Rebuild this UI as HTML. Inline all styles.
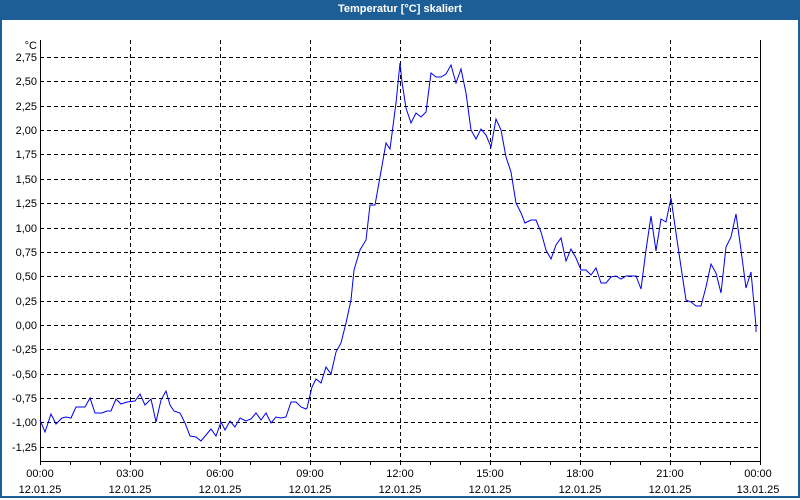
<!DOCTYPE html>
<html><head><meta charset="utf-8"><style>
html,body{margin:0;padding:0;width:800px;height:500px;overflow:hidden;background:#fff;font-family:"Liberation Sans",sans-serif}
.frame{position:absolute;left:0;top:0;width:796px;height:496px;border:2px solid #1d5e97;border-top:none}
.title{position:absolute;left:0;top:0;width:800px;height:20px;background:#1d5e97;color:#fff;font-weight:bold;font-size:11px;line-height:19px;text-align:center}
svg{position:absolute;left:0;top:0}
</style></head><body>
<div class="frame"></div>
<div class="title">Temperatur [°C] skaliert</div>
<svg width="800" height="500" font-family="Liberation Sans, sans-serif" font-size="11" fill="#000">
<g stroke="#000" stroke-width="1" stroke-dasharray="4,3" shape-rendering="crispEdges">
<line x1="40" y1="57.5" x2="760" y2="57.5"/><line x1="40" y1="81.5" x2="760" y2="81.5"/><line x1="40" y1="106.5" x2="760" y2="106.5"/><line x1="40" y1="130.5" x2="760" y2="130.5"/><line x1="40" y1="154.5" x2="760" y2="154.5"/><line x1="40" y1="179.5" x2="760" y2="179.5"/><line x1="40" y1="203.5" x2="760" y2="203.5"/><line x1="40" y1="228.5" x2="760" y2="228.5"/><line x1="40" y1="252.5" x2="760" y2="252.5"/><line x1="40" y1="276.5" x2="760" y2="276.5"/><line x1="40" y1="301.5" x2="760" y2="301.5"/><line x1="40" y1="325.5" x2="760" y2="325.5"/><line x1="40" y1="349.5" x2="760" y2="349.5"/><line x1="40" y1="374.5" x2="760" y2="374.5"/><line x1="40" y1="398.5" x2="760" y2="398.5"/><line x1="40" y1="422.5" x2="760" y2="422.5"/><line x1="40" y1="447.5" x2="760" y2="447.5"/>
<line x1="130.5" y1="40" x2="130.5" y2="461"/><line x1="220.5" y1="40" x2="220.5" y2="461"/><line x1="310.5" y1="40" x2="310.5" y2="461"/><line x1="400.5" y1="40" x2="400.5" y2="461"/><line x1="490.5" y1="40" x2="490.5" y2="461"/><line x1="580.5" y1="40" x2="580.5" y2="461"/><line x1="670.5" y1="40" x2="670.5" y2="461"/>
</g>
<g stroke="#000" stroke-width="1" shape-rendering="crispEdges" fill="none">
<path d="M40.5 40V461.5H760.5V40"/>
<path d="M70.5 461v4M100.5 461v4M130.5 461v4M160.5 461v4M190.5 461v4M220.5 461v4M250.5 461v4M280.5 461v4M310.5 461v4M340.5 461v4M370.5 461v4M400.5 461v4M430.5 461v4M460.5 461v4M490.5 461v4M520.5 461v4M550.5 461v4M580.5 461v4M610.5 461v4M640.5 461v4M670.5 461v4M700.5 461v4M730.5 461v4M760.5 461v4M40.5 461v4"/>
</g>
<polyline fill="none" stroke="#0000ee" stroke-width="1" points="40,420 45,432 51,414 56,424 62,418 66,417 71,418 76,407 80,407 85,407 90,398 95,413 102,413 107,411 111,411 116,399 121,404 127,402 135,401 140,394 145,405 151,399 156,422 161,400 166,391 170,405 174,411 180,413 185,423 190,436 196,437 201,441 206,435 211,429 216,436 221,422 225,430 230,421 235,427 240,418 246,421 251,419 256,413 261,420 266,413 271,423 276,417 281,418 286,417 291,402 296,402 301,407 306,409 307,408 312,387 316,379 321,383 326,367 331,374 336,352 341,343 346,323 351,300 354,270 360,250 366,240 370,205 375,205 380,177 386,143 390,149 396,103 400,63 402,82 406,108 411,123 416,113 421,117 426,112 431,73 436,77 441,77 446,74 451,65 456,83 461,69 466,93 471,130 476,139 481,129 486,135 491,147 496,119 501,130 506,157 511,172 516,203 521,213 525,223 531,220 536,220 541,232 546,250 551,259 556,245 561,238 566,261 571,249 576,258 581,270 586,270 591,275 596,268 601,283 606,283 611,277 616,276 621,279 626,276 631,276 636,276 641,289 646,250 651,216 656,251 661,219 666,222 671,198 676,233 681,267 686,300 691,302 696,306 701,306 706,287 711,264 716,273 721,293 726,247 731,237 736,214 741,250 746,288 751,272 756,326 756,332"/>
<g text-anchor="end">
<text x="37" y="49">°C</text>
<text x="37" y="61">2,75</text><text x="37" y="85">2,50</text><text x="37" y="110">2,25</text><text x="37" y="134">2,00</text><text x="37" y="158">1,75</text><text x="37" y="183">1,50</text><text x="37" y="207">1,25</text><text x="37" y="232">1,00</text><text x="37" y="256">0,75</text><text x="37" y="280">0,50</text><text x="37" y="305">0,25</text><text x="37" y="329">0,00</text><text x="37" y="353">-0,25</text><text x="37" y="378">-0,50</text><text x="37" y="402">-0,75</text><text x="37" y="426">-1,00</text><text x="37" y="451">-1,25</text>
</g>
<g text-anchor="middle">
<text x="40" y="477">00:00</text><text x="130" y="477">03:00</text><text x="220" y="477">06:00</text><text x="310" y="477">09:00</text><text x="400" y="477">12:00</text><text x="490" y="477">15:00</text><text x="580" y="477">18:00</text><text x="670" y="477">21:00</text><text x="758" y="477">00:00</text>
<text x="40" y="493">12.01.25</text><text x="130" y="493">12.01.25</text><text x="220" y="493">12.01.25</text><text x="310" y="493">12.01.25</text><text x="400" y="493">12.01.25</text><text x="490" y="493">12.01.25</text><text x="580" y="493">12.01.25</text><text x="670" y="493">12.01.25</text><text x="758" y="493">13.01.25</text>
</g>
</svg>
</body></html>
